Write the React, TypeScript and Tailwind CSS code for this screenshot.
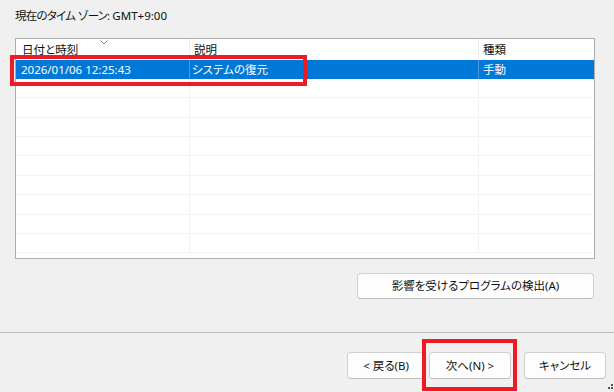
import React from "react";

const rows = Array.from({ length: 10 }, (_, i) => i);

function Btn({ children, className = "" }: { children: React.ReactNode; className?: string }) {
  return (
    <button
      className={
        "flex items-center justify-center rounded-[4px] border border-[#d0d0d0] border-b-[#bcbcbc] bg-[#fdfdfd] text-[11.5px] leading-none text-[#111] " +
        className
      }
    >
      {children}
    </button>
  );
}

export default function App() {
  return (
    <div className="relative h-[392px] w-[614px] overflow-hidden bg-[#f0f0f0] font-['Noto_Sans','Noto_Sans_CJK_JP',sans-serif] text-[11.5px] text-[#111] [font-feature-settings:'palt']">
      <div className="flex h-full flex-col">
        <p className="pl-[15px] pt-[8px] leading-[16px]">
          <span className="tracking-[-0.8px]">現在のタイム</span> <span className="tracking-[-0.8px]">ゾーン:</span> GMT+9:00
        </p>

        {/* restore point list */}
        <div className="relative mx-[15px] mt-[14px] h-[221px] w-[580px] overflow-hidden border border-[#adadad] bg-white">
          <div className="relative flex h-[20.5px] items-center leading-none">
            <div className="h-full w-[174px] border-r border-[#ececec] pl-[6px] pt-[5px]">日付と時刻</div>
            <div className="h-full w-[289px] border-r border-[#ececec] pl-[4px] pt-[5px]">説明</div>
            <div className="h-full flex-1 pl-[4px] pt-[5px]">種類</div>
            <svg className="absolute left-[84px] top-[1px]" width="8" height="5" viewBox="0 0 8 5">
              <path d="M0.5 0.5 L4 4 L7.5 0.5" fill="none" stroke="#8a8a8a" strokeWidth="1" />
            </svg>
          </div>
          {rows.map((i) => {
            const sel = i === 0;
            return (
              <div
                key={i}
                className={
                  "flex h-[19.4px] items-center leading-none " +
                  (sel ? "bg-[#0078d7] text-white" : "border-b border-[#f2f2f2]")
                }
              >
                <div className={"h-full w-[174px] border-r pl-[5px] pt-[4px] " + (sel ? "border-[#4a9be0]" : "border-[#f2f2f2]")}>
                  {sel ? "2026/01/06 12:25:43" : ""}
                </div>
                <div className={"h-full w-[289px] border-r pl-[2px] pt-[4px] " + (sel ? "border-[#4a9be0]" : "border-[#f2f2f2]")}>
                  {sel ? "システムの復元" : ""}
                </div>
                <div className="h-full flex-1 pl-[4px] pt-[4px]">{sel ? "手動" : ""}</div>
              </div>
            );
          })}
        </div>

        <div className="mt-[14px] flex justify-end pr-[20px]">
          <Btn className="h-[26px] w-[237px]">影響を受けるプログラムの検出(A)</Btn>
        </div>

        <div className="mt-[33px] border-t border-[#bdbdbd]" />

        <div className="mt-[19px] flex justify-end pr-[8px]">
          <Btn className="h-[27px] w-[78px]">&lt; 戻る(B)</Btn>
          <Btn className="ml-[4px] h-[27px] w-[82px] border-[#5b9bdc] border-b-[#4a8ad0]">次へ(N) &gt;</Btn>
          <Btn className="ml-[13px] h-[27px] w-[82px]">キャンセル</Btn>
        </div>
      </div>

      {/* annotation boxes */}
      <div className="absolute left-[10px] top-[55px] h-[31px] w-[297px] border-[4px] border-[#ed1c24]" />
      <div className="absolute left-[422px] top-[339px] h-[52px] w-[95px] border-[4px] border-[#ed1c24]" />

      {/* size grip */}
      <svg className="absolute bottom-[3px] right-[1px]" width="5" height="5" viewBox="0 0 5 5">
        <rect x="3" y="0" width="2" height="2" fill="#555" />
        <rect x="0" y="3" width="2" height="2" fill="#555" />
        <rect x="3" y="3" width="2" height="2" fill="#555" />
      </svg>
    </div>
  );
}
